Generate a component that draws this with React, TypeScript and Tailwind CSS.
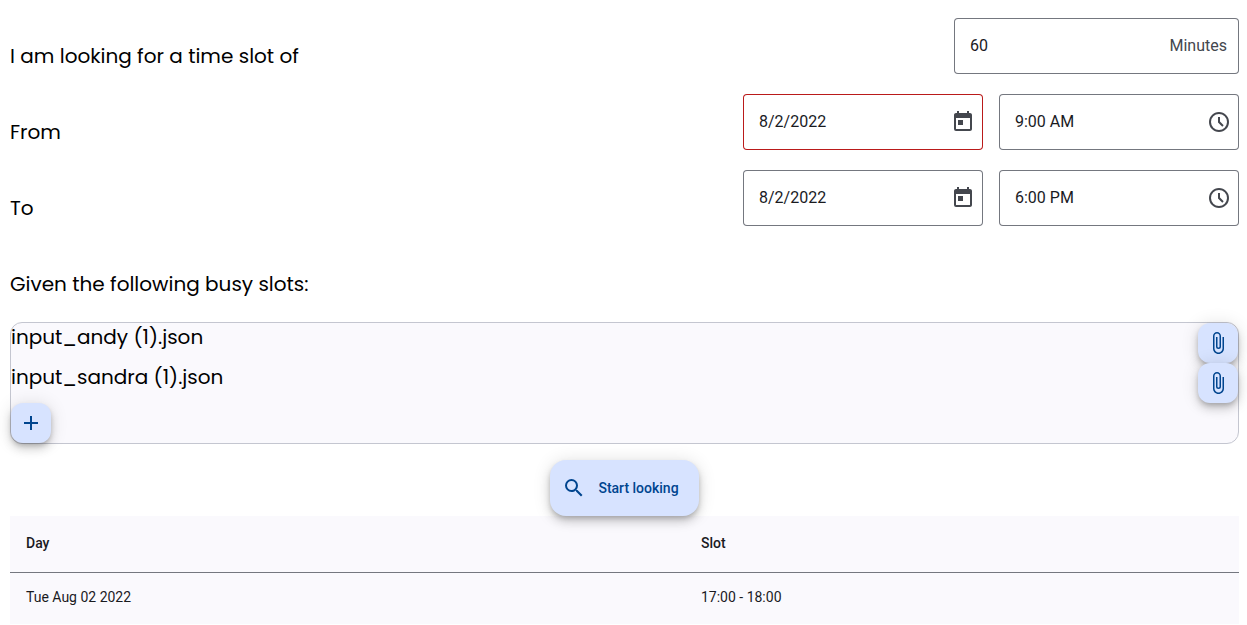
import { useId, useState } from "react";
import type { ReactNode } from "react";
import { MdAdd, MdAttachFile, MdSearch, MdToday } from "react-icons/md";

const ELEVATION =
  "shadow-[0_3px_5px_-1px_rgba(0,0,0,0.2),0_6px_10px_0_rgba(0,0,0,0.14),0_1px_18px_0_rgba(0,0,0,0.12)]";

function ClockIcon() {
  return (
    <svg viewBox="0 -960 960 960" className="size-6" fill="currentColor" aria-hidden="true">
      <path d="m612-292 56-56-148-148v-184h-80v216l172 172ZM480-80q-83 0-156-31.5T197-197q-54-54-85.5-127T80-480q0-83 31.5-156T197-763q54-54 127-85.5T480-880q83 0 156 31.5T763-763q54 54 85.5 127T880-480q0 83-31.5 156T763-197q-54 54-127 85.5T480-80Zm0-400Zm0 320q133 0 226.5-93.5T800-480q0-133-93.5-226.5T480-800q-133 0-226.5 93.5T160-480q0 133 93.5 226.5T480-160Z" />
    </svg>
  );
}

type FieldProps = {
  id?: string;
  label?: string;
  initial: string;
  wide?: boolean;
  invalid?: boolean;
  children: ReactNode;
};

function Field({ id, label, initial, wide, invalid, children }: FieldProps) {
  const [value, setValue] = useState(initial);
  return (
    <div
      className={`flex h-14 items-center rounded font-[Roboto,sans-serif] ring-1 ring-inset ${
        wide ? "w-[285px]" : "w-60"
      } ${invalid ? "ring-[#ba1a1a]" : "ring-[#74777f]"}`}
    >
      <input
        id={id}
        aria-label={label}
        aria-invalid={invalid}
        value={value}
        onChange={(e) => setValue(e.target.value)}
        className="h-6 min-w-0 flex-1 bg-transparent pl-4 text-base text-[#1a1b1f] outline-none"
      />
      {children}
    </div>
  );
}

function PickerButton({ label, children }: { label: string; children: ReactNode }) {
  return (
    <button
      type="button"
      aria-label={label}
      className="flex size-10 shrink-0 items-center justify-center rounded-full text-[#44474e]"
    >
      {children}
    </button>
  );
}

function FormRow({ label, htmlFor, children }: { label: string; htmlFor: string; children: ReactNode }) {
  return (
    <div className="flex items-center justify-between">
      <label htmlFor={htmlFor}>{label}</label>
      <div className="flex gap-4 pb-5">{children}</div>
    </div>
  );
}

function DateTimeRow({ label, date, time, invalid }: { label: string; date: string; time: string; invalid?: boolean }) {
  const id = useId();
  return (
    <FormRow label={label} htmlFor={id}>
      <Field id={id} initial={date} invalid={invalid}>
        <PickerButton label="Open calendar">
          <MdToday className="size-6" />
        </PickerButton>
      </Field>
      <Field label={`${label} time`} initial={time}>
        <PickerButton label="Open time options">
          <ClockIcon />
        </PickerButton>
      </Field>
    </FormRow>
  );
}

function SmallFab({ label, children }: { label: string; children: ReactNode }) {
  return (
    <button
      type="button"
      aria-label={label}
      className={`flex size-10 shrink-0 items-center justify-center rounded-xl bg-[#d7e3ff] text-[#00458f] ${ELEVATION}`}
    >
      {children}
    </button>
  );
}

const files = ["input_andy (1).json", "input_sandra (1).json"];
const slots = [{ day: "Tue Aug 02 2022", slot: "17:00 - 18:00" }];

export default function App() {
  return (
    <main className="bg-white pt-[18px] pr-2 pl-[10px] font-[Roboto,sans-serif] text-black">
      <div className="font-[Poppins,Inter,sans-serif] text-xl">
        <FormRow label="I am looking for a time slot of" htmlFor="duration">
          <Field id="duration" initial="60" wide>
            <span className="pr-3 text-base text-[#44474e]">Minutes</span>
          </Field>
        </FormRow>
        <DateTimeRow label="From" date="8/2/2022" time="9:00 AM" invalid />
        <DateTimeRow label="To" date="8/2/2022" time="6:00 PM" />
        <p className="flex h-[76px] items-center">Given the following busy slots:</p>
        <div className="rounded-xl border border-[#c4c6d0] bg-[#faf9fd]">
          <ul>
            {files.map((name) => (
              <li key={name} className="flex justify-between">
                <span>{name}</span>
                <SmallFab label={`Attach ${name}`}>
                  <MdAttachFile className="size-6" />
                </SmallFab>
              </li>
            ))}
          </ul>
          <SmallFab label="Add file">
            <MdAdd className="size-6" />
          </SmallFab>
        </div>
      </div>

      <div className="mt-4 flex justify-center">
        <button
          type="button"
          className={`relative flex h-14 items-center gap-3 rounded-2xl bg-[#d7e3ff] pr-5 pl-3 text-sm font-medium text-[#00458f] ${ELEVATION}`}
        >
          <MdSearch className="size-6" />
          Start looking
        </button>
      </div>

      <table className="w-full bg-[#faf9fd] text-left text-sm text-[#1a1b1f]">
        <thead>
          <tr className="h-14">
            <th className="px-4 pb-0.5 font-medium">Day</th>
            <th className="px-4 pb-0.5 font-medium">Slot</th>
          </tr>
        </thead>
        <tbody>
          {slots.map((s) => (
            <tr key={s.day} className="h-[52px] border-t border-[#74777f]">
              <td className="px-4 pb-0.5">{s.day}</td>
              <td className="px-4 pb-0.5">{s.slot}</td>
            </tr>
          ))}
        </tbody>
      </table>
    </main>
  );
}
